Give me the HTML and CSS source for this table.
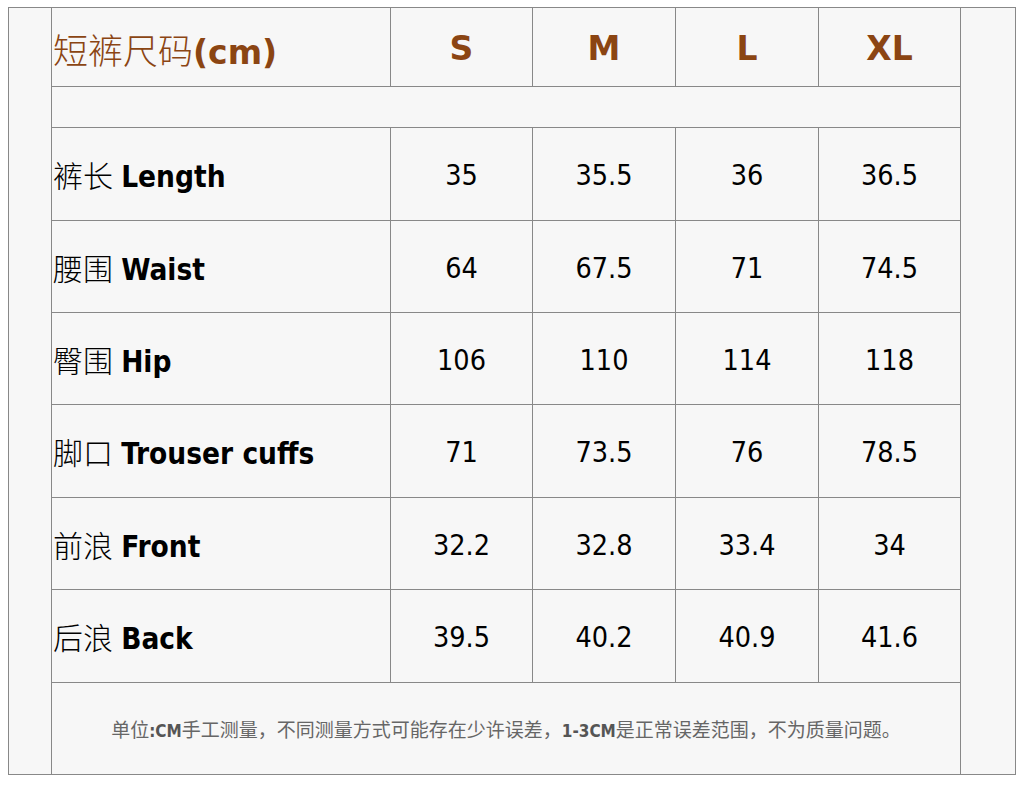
FILE: index.html
```html
<!DOCTYPE html>
<html lang="zh">
<head>
<meta charset="utf-8">
<title>短裤尺码</title>
<link rel="stylesheet" href="styles.css">
</head>
<body>
<div class="frame">
  <div class="side side-left"></div>
  <div class="chart">
    <div class="cell head label"><span><span class="zh">短裤尺码</span><b>(cm)</b></span></div>
    <div class="cell head">S</div>
    <div class="cell head">M</div>
    <div class="cell head">L</div>
    <div class="cell head last">XL</div>

    <div class="cell spacer"></div>

    <div class="cell label"><span><span class="zh">裤长</span> <b>Length</b></span></div>
    <div class="cell">35</div>
    <div class="cell">35.5</div>
    <div class="cell">36</div>
    <div class="cell last">36.5</div>

    <div class="cell label"><span><span class="zh">腰围</span> <b>Waist</b></span></div>
    <div class="cell">64</div>
    <div class="cell">67.5</div>
    <div class="cell">71</div>
    <div class="cell last">74.5</div>

    <div class="cell label"><span><span class="zh">臀围</span> <b>Hip</b></span></div>
    <div class="cell">106</div>
    <div class="cell">110</div>
    <div class="cell">114</div>
    <div class="cell last">118</div>

    <div class="cell label"><span><span class="zh">脚口</span> <b>Trouser cuffs</b></span></div>
    <div class="cell">71</div>
    <div class="cell">73.5</div>
    <div class="cell">76</div>
    <div class="cell last">78.5</div>

    <div class="cell label"><span><span class="zh">前浪</span> <b>Front</b></span></div>
    <div class="cell">32.2</div>
    <div class="cell">32.8</div>
    <div class="cell">33.4</div>
    <div class="cell last">34</div>

    <div class="cell label"><span><span class="zh">后浪</span> <b>Back</b></span></div>
    <div class="cell">39.5</div>
    <div class="cell">40.2</div>
    <div class="cell">40.9</div>
    <div class="cell last">41.6</div>

    <div class="cell note"><span>单位<b>:CM</b>手工测量，不同测量方式可能存在少许误差，<b>1-3CM</b>是正常误差范围，不为质量问题。</span></div>
  </div>
  <div class="side side-right"></div>
</div>
</body>
</html>
```

FILE: styles.css
```css
html, body {
  margin: 0;
  padding: 0;
  background: #ffffff;
}

body {
  padding: 7px 0 0 8px;
  font-family: "DejaVu Sans Condensed", "DejaVu Sans", "Noto Sans CJK SC", sans-serif;
  font-stretch: condensed;
  color: #000;
}

.frame {
  width: 1008px;
  height: 768px;
  box-sizing: border-box;
  border: 1px solid #888;
  background: #f7f7f7;
  display: flex;
}

.side-left {
  width: 42px;
}

.side-right {
  flex: 1;
}

.chart {
  width: 910px;
  box-sizing: border-box;
  border-left: 1px solid #888;
  border-right: 1px solid #888;
  display: grid;
  grid-template-columns: 339px 142px 143px 143px 141px;
  grid-template-rows: 79px 41px 93px 92px 92px 93px 92px 93px 1fr;
}

.cell {
  border-right: 1px solid #888;
  border-bottom: 1px solid #888;
  display: flex;
  align-items: center;
  justify-content: center;
  font-size: 28.5px;
  padding-top: 3px;
  box-sizing: border-box;
}

.cell.last {
  border-right: none;
}

.cell.label {
  justify-content: flex-start;
  padding-left: 1px;
  padding-top: 0;
  white-space: pre;
}

.zh {
  font-family: "Noto Sans CJK SC", sans-serif;
  font-weight: 300;
}

.label .zh {
  font-size: 30px;
}

.label b {
  font-size: 29.5px;
  font-weight: bold;
}

.head {
  color: #8b4513;
  font-family: "DejaVu Sans", sans-serif;
  font-stretch: normal;
  font-weight: bold;
  font-size: 33px;
  padding-top: 3px;
}

.head.label {
  padding-top: 2px;
}

.head.label b {
  font-size: 33px;
}

.head.label .zh {
  font-size: 35px;
  font-weight: 300;
}

.spacer {
  grid-column: 1 / -1;
  border-right: none;
}

.note {
  grid-column: 1 / -1;
  border-right: none;
  border-bottom: none;
  font-family: "Noto Sans CJK SC", sans-serif;
  font-size: 19px;
  color: #666;
  padding-top: 0;
}

.note b {
  font-family: "DejaVu Sans Condensed", "DejaVu Sans", sans-serif;
  font-size: 17px;
  color: #555;
}
```
